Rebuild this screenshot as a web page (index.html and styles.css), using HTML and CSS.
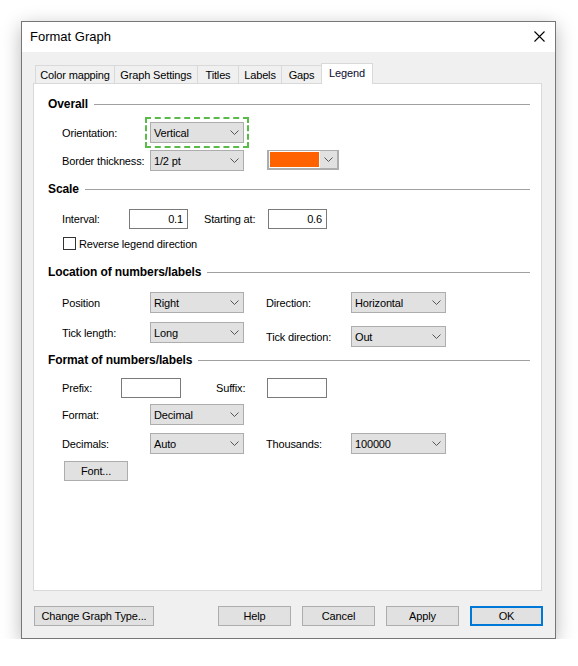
FILE: index.html
```html
<!DOCTYPE html>
<html>
<head>
<meta charset="utf-8">
<link rel="stylesheet" href="styles.css">
</head>
<body>
<div class="window">
  <div class="titlebar">
    <span class="title">Format Graph</span>
    <svg class="close" width="11" height="11" viewBox="0 0 11 11"><path d="M0.5 0.5 L10.5 10.5 M10.5 0.5 L0.5 10.5" stroke="#000" stroke-width="1.1" fill="none"/></svg>
  </div>
  <div class="body">
    <div class="tabs">
      <div class="tab t-color">Color mapping</div>
      <div class="tab t-graph">Graph Settings</div>
      <div class="tab t-titles">Titles</div>
      <div class="tab t-labels">Labels</div>
      <div class="tab t-gaps">Gaps</div>
      <div class="tab t-legend active">Legend</div>
    </div>
    <div class="panel">
      <div class="heading h-overall"><span>Overall</span><i class="rule"></i></div>
      <div class="row r-orient">
        <div class="grp">
          <span class="lbl w88">Orientation:</span>
          <div class="select w94 focused"><span>Vertical</span><svg class="chev" width="9" height="5" viewBox="0 0 9 5"><path d="M0.5 0.5 L4.5 4.5 L8.5 0.5" stroke="#555" fill="none"/></svg></div>
        </div>
      </div>
      <div class="row r-border">
        <div class="grp">
          <span class="lbl w88">Border thickness:</span>
          <div class="select w94"><span>1/2 pt</span><svg class="chev" width="9" height="5" viewBox="0 0 9 5"><path d="M0.5 0.5 L4.5 4.5 L8.5 0.5" stroke="#555" fill="none"/></svg></div>
        </div>
        <div class="picker">
          <div class="swatch"></div>
          <div class="pbtn"><svg class="chev" width="9" height="5" viewBox="0 0 9 5"><path d="M0.5 0.5 L4.5 4.5 L8.5 0.5" stroke="#555" fill="none"/></svg></div>
        </div>
      </div>

      <div class="heading h-scale"><span>Scale</span><i class="rule"></i></div>
      <div class="row r-interval">
        <div class="grp">
          <span class="lbl w67">Interval:</span>
          <div class="input w59">0.1</div>
        </div>
        <div class="grp g-start">
          <span class="lbl w64">Starting at:</span>
          <div class="input w59">0.6</div>
        </div>
      </div>
      <div class="row r-check">
        <div class="grp">
          <span class="cb"></span>
          <span class="lbl cb-lbl">Reverse legend direction</span>
        </div>
      </div>

      <div class="heading h-loc"><span>Location of numbers/labels</span><i class="rule"></i></div>
      <div class="row r-pos">
        <div class="grp">
          <span class="lbl w88">Position</span>
          <div class="select w94"><span>Right</span><svg class="chev" width="9" height="5" viewBox="0 0 9 5"><path d="M0.5 0.5 L4.5 4.5 L8.5 0.5" stroke="#555" fill="none"/></svg></div>
        </div>
        <div class="grp g-right">
          <span class="lbl w85">Direction:</span>
          <div class="select w95"><span>Horizontal</span><svg class="chev" width="9" height="5" viewBox="0 0 9 5"><path d="M0.5 0.5 L4.5 4.5 L8.5 0.5" stroke="#555" fill="none"/></svg></div>
        </div>
      </div>
      <div class="row r-tick">
        <div class="grp">
          <span class="lbl w88">Tick length:</span>
          <div class="select w94"><span>Long</span><svg class="chev" width="9" height="5" viewBox="0 0 9 5"><path d="M0.5 0.5 L4.5 4.5 L8.5 0.5" stroke="#555" fill="none"/></svg></div>
        </div>
        <div class="grp g-right g-low">
          <span class="lbl w85">Tick direction:</span>
          <div class="select w95"><span>Out</span><svg class="chev" width="9" height="5" viewBox="0 0 9 5"><path d="M0.5 0.5 L4.5 4.5 L8.5 0.5" stroke="#555" fill="none"/></svg></div>
        </div>
      </div>

      <div class="heading h-fmt"><span>Format of numbers/labels</span><i class="rule"></i></div>
      <div class="row r-prefix">
        <div class="grp">
          <span class="lbl w59">Prefix:</span>
          <div class="input w60"></div>
        </div>
        <div class="grp g-suffix">
          <span class="lbl w51">Suffix:</span>
          <div class="input w60"></div>
        </div>
      </div>
      <div class="row r-format">
        <div class="grp">
          <span class="lbl w88">Format:</span>
          <div class="select w94"><span>Decimal</span><svg class="chev" width="9" height="5" viewBox="0 0 9 5"><path d="M0.5 0.5 L4.5 4.5 L8.5 0.5" stroke="#555" fill="none"/></svg></div>
        </div>
      </div>
      <div class="row r-dec">
        <div class="grp">
          <span class="lbl w88">Decimals:</span>
          <div class="select w94"><span>Auto</span><svg class="chev" width="9" height="5" viewBox="0 0 9 5"><path d="M0.5 0.5 L4.5 4.5 L8.5 0.5" stroke="#555" fill="none"/></svg></div>
        </div>
        <div class="grp g-right">
          <span class="lbl w85">Thousands:</span>
          <div class="select w95"><span>100000</span><svg class="chev" width="9" height="5" viewBox="0 0 9 5"><path d="M0.5 0.5 L4.5 4.5 L8.5 0.5" stroke="#555" fill="none"/></svg></div>
        </div>
      </div>
      <div class="btn font-btn">Font...</div>
    </div>
    <div class="footer">
      <div class="btn w120">Change Graph Type...</div>
      <div class="actions">
        <div class="btn w73">Help</div>
        <div class="btn w73">Cancel</div>
        <div class="btn w73">Apply</div>
        <div class="btn w73 default">OK</div>
      </div>
    </div>
  </div>
</div>
</body>
</html>
```
FILE: styles.css
```css
body {
  margin: 0;
  background: #fff;
  font-family: "Liberation Sans", Arial, sans-serif;
  font-size: 11px;
  letter-spacing: -0.15px;
  color: #000;
}
.window {
  margin: 21px 0 0 21px;
  width: 535px;
  height: 618px;
  box-sizing: border-box;
  border: 1px solid #767676;
  box-shadow: 0 5px 18px rgba(0, 0, 0, 0.28);
  display: flex;
  flex-direction: column;
}
.titlebar {
  height: 30px;
  flex: none;
  background: #fff;
  display: flex;
  align-items: center;
  justify-content: space-between;
  padding: 0 10px 0 8px;
}
.title {
  font-size: 13px;
  letter-spacing: 0;
  margin-top: -1px;
}
.close {
  margin-bottom: 2px;
}
.body {
  flex: 1;
  background: #f0f0f0;
  padding-top: 11px;
}
.tabs {
  display: flex;
  align-items: flex-end;
  height: 20px;
  margin-left: 13px;
}
.tab {
  height: 18px;
  box-sizing: border-box;
  border: 1px solid #d9d9d9;
  border-bottom: none;
  margin-left: -1px;
  text-align: center;
  line-height: 18px;
  background: #f0f0f0;
  white-space: nowrap;
}
.t-color { margin-left: 0; width: 80px; }
.t-graph { width: 84px; }
.t-titles { width: 42px; }
.t-labels { width: 44px; }
.t-gaps { width: 41px; }
.t-legend { width: 52px; }
.tab.active {
  height: 21px;
  margin-bottom: -1px;
  background: #fff;
  position: relative;
  z-index: 1;
  line-height: 19px;
  color: #0a0a30;
}
.panel {
  margin-left: 11px;
  width: 509px;
  height: 508px;
  box-sizing: border-box;
  border: 1px solid #d9d9d9;
  background: #fff;
  padding: 0 11px 0 14px;
}
.heading {
  display: flex;
  align-items: center;
  height: 16px;
  font-weight: bold;
  font-size: 12px;
  letter-spacing: -0.1px;
}
.heading .rule {
  flex: 1;
  height: 1px;
  background: #a0a0a0;
  margin-left: 6px;
}
.h-overall { margin-top: 12px; }
.h-scale { margin-top: 10px; }
.h-loc { margin-top: 14px; }
.h-fmt { margin-top: 5px; }

.row {
  display: flex;
  align-items: flex-start;
  padding-left: 14px;
}
.grp {
  display: flex;
  align-items: center;
}
.lbl { white-space: nowrap; }
.w51 { width: 51px; }
.w59 { width: 59px; }
.w60 { width: 60px; }
.w64 { width: 64px; }
.w67 { width: 67px; }
.w73 { width: 73px; }
.w85 { width: 85px; }
.w88 { width: 88px; }
.w94 { width: 94px; }
.w95 { width: 95px; }
.w120 { width: 120px; }

.r-orient { margin-top: 10px; }
.r-border { margin-top: 7px; }
.r-interval { margin-top: 12px; }
.r-check { margin-top: 8px; padding-left: 15px; }
.r-pos { margin-top: 12px; }
.r-tick { margin-top: 9px; }
.r-prefix { margin-top: 10px; }
.r-format { margin-top: 6px; }
.r-dec { margin-top: 8px; }

.g-start { margin-left: 16px; }
.g-right { margin-left: 22px; }
.g-low { margin-top: 4px; }
.g-suffix { margin-left: 35px; }

.select {
  height: 21px;
  box-sizing: border-box;
  border: 1px solid #adadad;
  background: #e1e1e1;
  display: flex;
  align-items: center;
  justify-content: space-between;
  padding: 0 4px 0 3px;
  white-space: nowrap;
}
.select.focused {
  outline: 2px dashed #5bbb4a;
  outline-offset: 3px;
}
.chev { display: block; flex: none; }
.input {
  height: 20px;
  box-sizing: border-box;
  border: 1px solid #7a7a7a;
  background: #fff;
  text-align: right;
  padding-right: 4px;
  line-height: 18px;
}
.picker {
  margin-left: 23px;
  width: 72px;
  height: 20px;
  box-sizing: border-box;
  display: flex;
  border: 1px solid #adadad;
  border-width: 1px 2px 2px 2px;
  background: #fff;
}
.swatch {
  flex: 1;
  border: 1px solid #fff;
  background: #ff6200;
}
.pbtn {
  width: 17px;
  background: #e1e1e1;
  display: flex;
  align-items: center;
  justify-content: center;
}
.cb {
  width: 13px;
  height: 13px;
  box-sizing: border-box;
  border: 1px solid #333;
  background: #fff;
}
.cb-lbl { margin-left: 3px; }

.btn {
  height: 20px;
  box-sizing: border-box;
  border: 1px solid #adadad;
  background: #e1e1e1;
  display: flex;
  align-items: center;
  justify-content: center;
  white-space: nowrap;
}
.btn.default {
  border: 2px solid #0078d7;
}
.font-btn {
  margin-top: 7px;
  margin-left: 16px;
  width: 64px;
}
.footer {
  display: flex;
  justify-content: space-between;
  margin-top: 15px;
  padding: 0 12px;
}
.actions {
  display: flex;
  gap: 11px;
}
```
